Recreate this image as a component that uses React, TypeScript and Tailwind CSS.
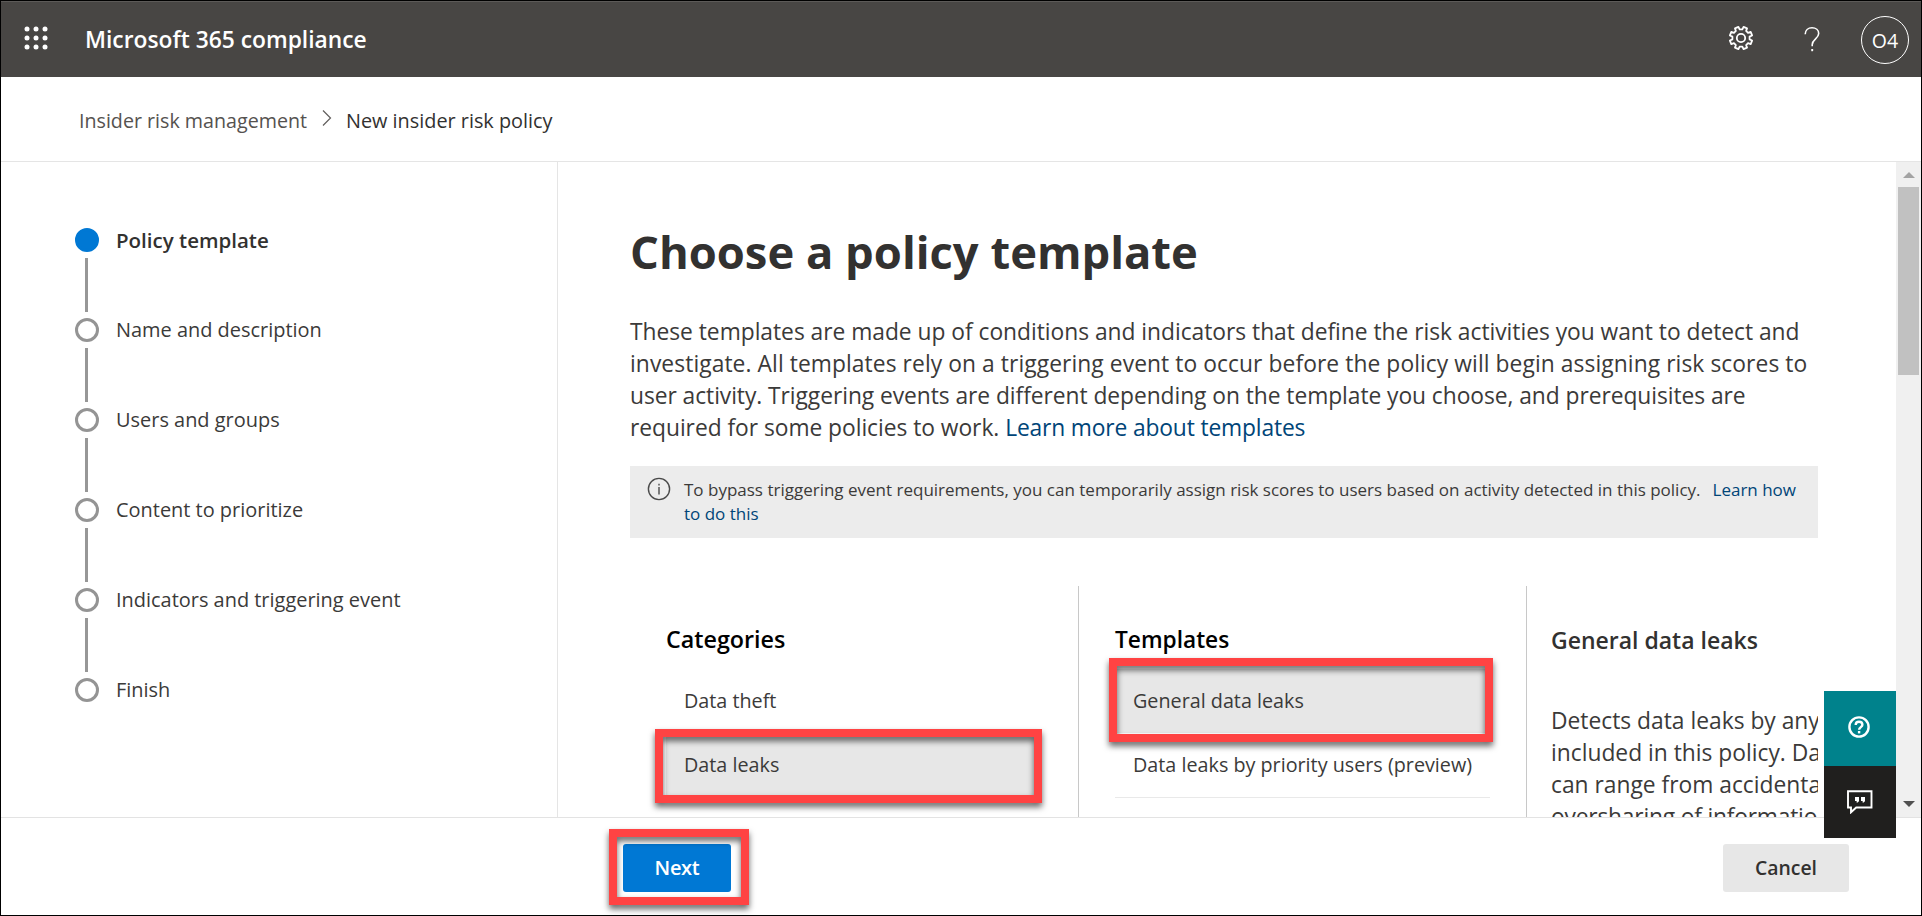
import type { ReactNode } from "react";

const steps = [
  "Policy template",
  "Name and description",
  "Users and groups",
  "Content to prioritize",
  "Indicators and triggering event",
  "Finish",
];

function AppLauncherIcon() {
  return (
    <svg width="24" height="24" viewBox="0 0 24 24" fill="white" aria-hidden>
      {[3, 12, 21].map((y) => [3, 12, 21].map((x) => <circle key={`${x}-${y}`} cx={x} cy={y} r="2.5" />))}
    </svg>
  );
}

const gearPoints = Array.from({ length: 8 }, (_, i) => 22.5 + i * 45)
  .flatMap((angle) => [
    [angle - 13.5, 8.7],
    [angle - 9.5, 11.4],
    [angle + 9.5, 11.4],
    [angle + 13.5, 8.7],
  ])
  .map(([deg, r]) => {
    const rad = (deg * Math.PI) / 180;
    return `${(13 + r * Math.cos(rad)).toFixed(2)},${(13 + r * Math.sin(rad)).toFixed(2)}`;
  })
  .join(" ");

function GearIcon() {
  return (
    <svg width="26" height="26" viewBox="0 0 26 26" fill="none" stroke="white" strokeWidth="1.8" strokeLinejoin="round" aria-hidden>
      <polygon points={gearPoints} />
      <circle cx="13" cy="13" r="4.2" />
    </svg>
  );
}

function HelpIcon() {
  return (
    <svg width="16" height="26" viewBox="0 0 16 26" fill="none" stroke="white" strokeWidth="1.6" aria-hidden>
      <path d="M1.2 8.3C1.2 4.2 4.2 1.7 8 1.7c3.8 0 6.7 2.3 6.7 5.9 0 5-6.5 5.7-6.5 11.2v1.5" />
      <path d="M8.2 23v2.2" strokeWidth="1.9" />
    </svg>
  );
}

function HelpCircleIcon() {
  return (
    <svg width="22" height="22" viewBox="0 0 22 22" fill="none" stroke="white" strokeWidth="2.4" aria-hidden>
      <circle cx="11" cy="11" r="9.6" />
      <path d="M7.7 8.9C7.7 7 9.1 5.7 11 5.7s3.4 1.2 3.400 3.100c0 2.200-3.300 2.500-3.300 5" />
      <path d="M11.1 15v2.400" />
    </svg>
  );
}

function InfoIcon() {
  return (
    <svg width="24" height="24" viewBox="0 0 24 24" fill="none" stroke="#4a4a4a" strokeWidth="1.4" aria-hidden>
      <circle cx="12" cy="12" r="10.6" />
      <path d="M12 10v7.5M12 6.7v1.7" />
    </svg>
  );
}

function FeedbackIcon() {
  return (
    <svg width="26" height="24" viewBox="0 0 26 24" fill="none" stroke="white" strokeWidth="1.9" aria-hidden>
      <path d="M1 1.2h23.5v16.3H9.2L4 22.3v-4.8H1z" />
      <path d="M8 7h4v4.2l-1.8 1.5-1-.8.9-1H8zM14 7h4v4.2l-1.8 1.5-1-.8.9-1H14z" fill="white" stroke="none" />
    </svg>
  );
}

function Highlight({ className }: { className: string }) {
  return (
    <span
      className={`pointer-events-none absolute z-10 border-8 border-[#ff4343] drop-shadow-[0_4px_3px_rgba(0,0,0,0.6)] ${className}`}
    />
  );
}

function Option({ children, selected }: { children: ReactNode; selected?: boolean }) {
  return (
    <li
      className={`relative flex h-16 w-[375px] items-center pl-[18px] text-[19.75px] whitespace-nowrap text-[#3b3a39] ${
        selected ? "bg-[#e7e7e7]" : ""
      }`}
    >
      {children}
    </li>
  );
}

export default function App() {
  return (
    <div className="flex h-[916px] w-[1922px] flex-col overflow-hidden border border-black bg-white font-['Open_Sans','Noto_Sans',sans-serif] text-[#323130]">
      <header className="flex h-[76px] shrink-0 items-center border-t border-[#5c5a58] bg-[#484644] text-white">
        <div className="ml-[23px] -mt-[3px]">
          <AppLauncherIcon />
        </div>
        <h1 className="ml-[37px] pt-0.5 text-[22.8px] font-semibold whitespace-nowrap">Microsoft 365 compliance</h1>
        <div className="ml-auto flex items-center pr-[12px]">
          <div className="-mt-[3px] mr-[50px]">
            <GearIcon />
          </div>
          <div className="-mt-[2px] mr-[41px]">
            <HelpIcon />
          </div>
          <div className="flex size-12 items-center justify-center rounded-full border border-white pt-0.5 text-[19.5px]">O4</div>
        </div>
      </header>

      <nav className="flex h-[85px] shrink-0 items-center border-b border-[#e5e5e5] pl-[78px] whitespace-nowrap">
        <span className="pt-[3px] text-[19.66px] text-[#55524f]">Insider risk management</span>
        <svg className="-mt-[2px] ml-[14px]" width="12" height="18" viewBox="0 0 12 18" fill="none" stroke="#605e5c" strokeWidth="1.2" aria-hidden>
          <path d="M2 1.5 9.5 9 2 16.5" />
        </svg>
        <span className="ml-[13px] pt-[3px] text-[19.85px]">New insider risk policy</span>
      </nav>

      <div className="relative flex h-[655px] shrink-0">
        <aside className="w-[557px] shrink-0 border-r border-[#e5e5e5] pt-[66px] pl-[74px]">
          <ol>
            {steps.map((step, i) => (
              <li key={step} className="flex h-[90px] gap-[17px]">
                <div className="flex w-6 flex-col items-center">
                  <span
                    className={`size-6 shrink-0 rounded-full border-[3px] ${
                      i === 0 ? "border-[#0078d4] bg-[#0078d4]" : "border-[#949494] bg-white"
                    }`}
                  />
                  {i < steps.length - 1 && <span className="mt-1.5 mr-px h-[54px] w-[3px] bg-[#979797]" />}
                </div>
                <span
                  className={`h-6 leading-6 whitespace-nowrap ${
                    i === 0 ? "text-[20.5px] font-semibold" : "text-[19.95px] text-[#3b3a39]"
                  }`}
                >
                  {step}
                </span>
              </li>
            ))}
          </ol>
        </aside>

        <main className="w-[1260px] shrink-0 overflow-hidden pt-[60px] pl-[72px]">
          <h2 className="h-[60px] text-[45.35px] leading-[60px] font-bold whitespace-nowrap">Choose a policy template</h2>
          <p className="mt-[34px] text-[22.8px] leading-8 whitespace-nowrap text-[#3b3a39]">
            <span className="block tracking-[-0.026px]">
              These templates are made up of conditions and indicators that define the risk activities you want to detect and
            </span>
            <span className="block tracking-[0.078px]">
              investigate. All templates rely on a triggering event to occur before the policy will begin assigning risk scores to
            </span>
            <span className="block tracking-[-0.057px]">
              user activity. Triggering events are different depending on the template you choose, and prerequisites are
            </span>
            <span className="block">
              <span className="tracking-[-0.04px]">required for some policies to work. </span>
              <a className="tracking-[-0.15px] text-[#004578]">Learn more about templates</a>
            </span>
          </p>

          <div className="mt-[22px] flex h-[72px] bg-[#ececec] pt-[12px] pl-[17px]">
            <div className="-mt-px">
              <InfoIcon />
            </div>
            <p className="ml-[13px] text-[17px] leading-6 whitespace-nowrap text-[#3b3a39]">
              To bypass triggering event requirements, you can temporarily assign risk scores to users based on activity detected in this policy.
              <a className="ml-[12px] text-[#004578]">Learn how</a>
              <br />
              <a className="text-[#004578]">to do this</a>
            </p>
          </div>

          <div className="mt-12 flex h-[231px]">
            <section className="w-[449px] shrink-0 border-r border-[#c8c8c8] pt-[38px] pl-[36px]">
              <h3 className="h-[30px] text-[23.3px] leading-[30px] font-semibold text-black">Categories</h3>
              <ul className="mt-[15px]">
                <Option>Data theft</Option>
                <Option selected>
                  Data leaks
                  <Highlight className="-top-1 -right-px -bottom-1.5 -left-[11px]" />
                </Option>
              </ul>
            </section>
            <section className="w-[448px] shrink-0 border-r border-[#c8c8c8] pt-[38px] pl-[36px]">
              <h3 className="h-[30px] text-[22.7px] leading-[31px] font-semibold text-black">Templates</h3>
              <ul className="mt-[15px] w-[375px] border-b border-[#e9e9e9]">
                <Option selected>
                  General data leaks
                  <Highlight className="-top-[11px] -right-[3px] -bottom-[9px] -left-1.5" />
                </Option>
                <Option>Data leaks by priority users (preview)</Option>
              </ul>
            </section>
            <section className="min-w-0 flex-1 overflow-hidden pt-[39px] pl-[24px]">
              <h3 className="h-[30px] text-[23px] leading-[30px] font-semibold whitespace-nowrap">General data leaks</h3>
              <p className="mt-[50px] text-[22.8px] leading-8 whitespace-nowrap text-[#3b3a39]">
                <span className="block">Detects data leaks by any user</span>
                <span className="block">included in this policy. Data leaks</span>
                <span className="block">can range from accidental</span>
                <span className="block tracking-[-0.2px]">oversharing of information outside</span>
              </p>
            </section>
          </div>
        </main>

        <div className="ml-[78px] flex flex-1 flex-col items-center bg-[#f0f0f0]">
          <svg className="mt-[10px]" width="12" height="6" viewBox="0 0 12 6" fill="#a3a3a3" aria-hidden>
            <path d="M0 6 6 0l6 6z" />
          </svg>
          <div className="mt-[9px] h-[188px] w-[21px] bg-[#c1c1c1]" />
          <svg className="mt-auto mb-[10px]" width="12" height="6" viewBox="0 0 12 6" fill="#505050" aria-hidden>
            <path d="M0 0h12L6 6z" />
          </svg>
        </div>

        <div className="absolute top-[529px] right-[25px] z-20 flex w-[72px] flex-col text-white">
          <button className="flex h-[75px] items-center justify-center bg-[#00828c] pr-[2px] pb-[3px]">
            <HelpCircleIcon />
          </button>
          <button className="flex h-[72px] items-center justify-center bg-[#201f1e]">
            <FeedbackIcon />
          </button>
        </div>
      </div>

      <footer className="flex flex-1 items-start justify-between border-t border-[#e3e3e3] pt-[26px] pr-[72px] pl-[622px]">
        <button className="relative flex h-12 w-[108px] items-center justify-center rounded-[3px] bg-[#0078d4] text-[20px] font-semibold tracking-[-0.3px] text-white">
          Next
          <Highlight className="-top-[15px] -right-[18px] -bottom-[13px] -left-[14px]" />
        </button>
        <button className="flex h-12 w-[126px] items-center justify-center rounded-[3px] bg-[#e7e7e7] text-[19.4px] font-semibold">
          Cancel
        </button>
      </footer>
    </div>
  );
}
